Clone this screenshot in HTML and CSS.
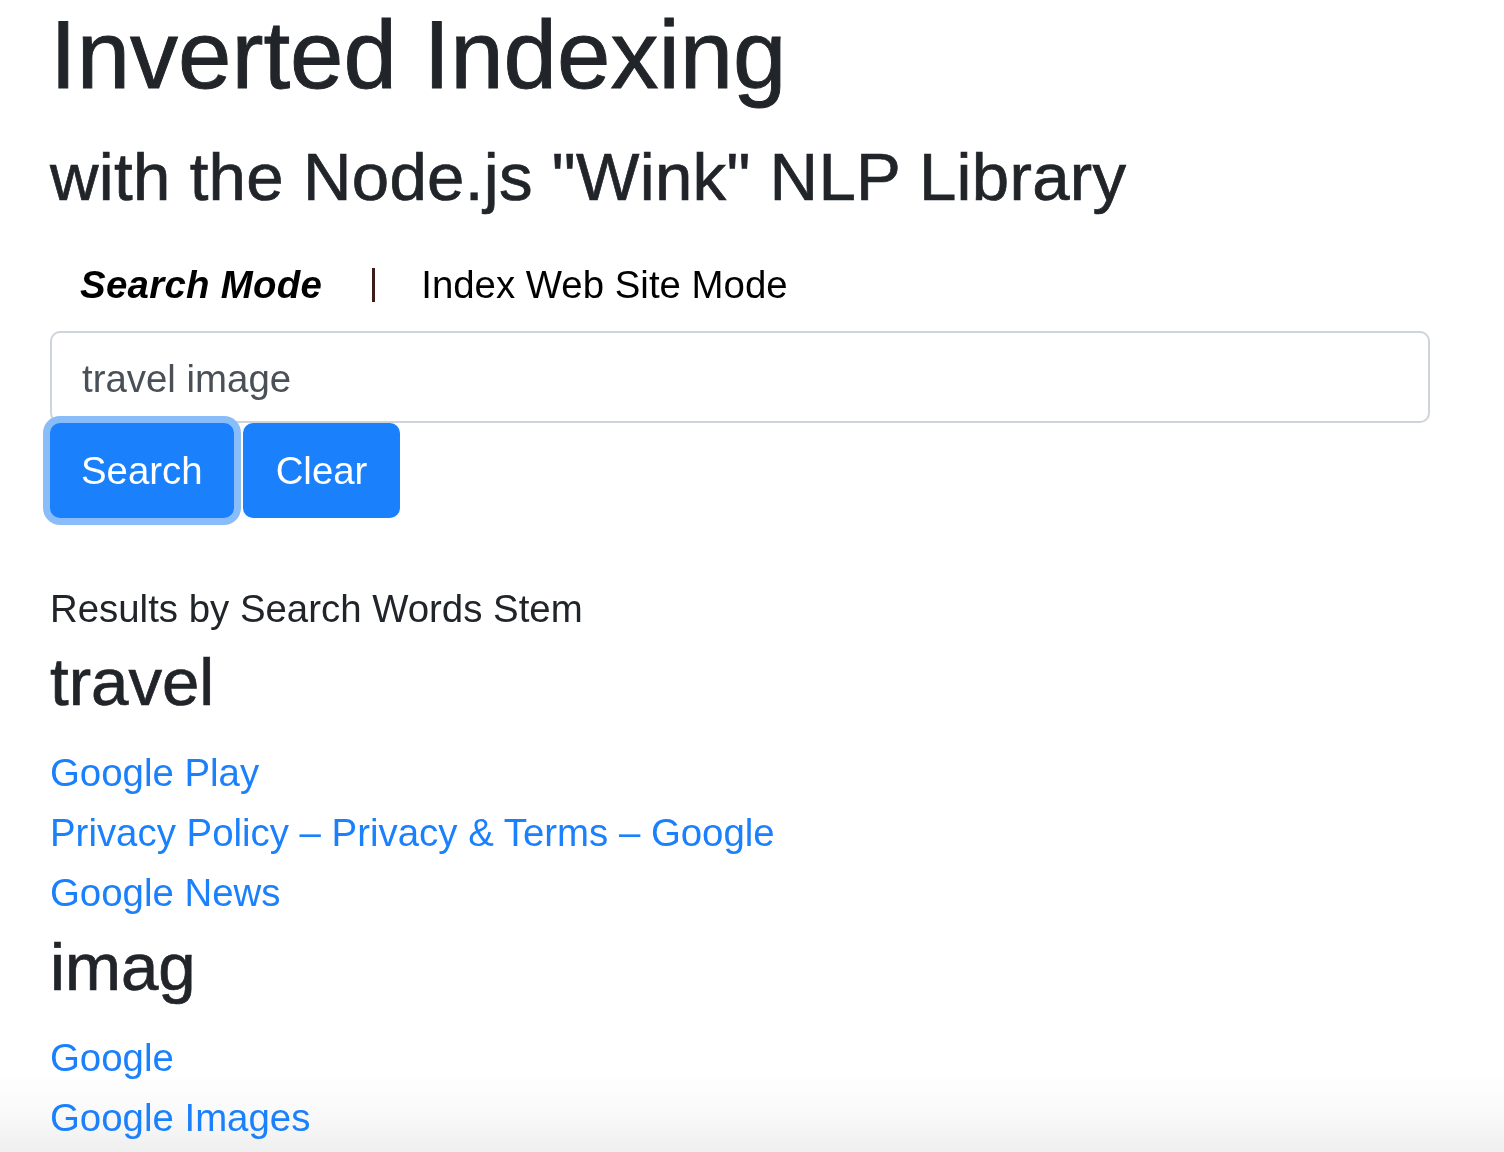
FILE: index.html
```html
<!DOCTYPE html>
<html lang="en">
<head>
<meta charset="utf-8">
<title>Inverted Indexing</title>
<link rel="stylesheet" href="styles.css">
</head>
<body>
<div class="window-fade"></div>
<main class="page">
  <h1 class="title">Inverted Indexing</h1>
  <h3 class="subtitle">with the Node.js "Wink" NLP Library</h3>

  <nav class="modes">
    <span class="mode mode-active">Search Mode</span>
    <span class="mode-sep"></span>
    <span class="mode">Index Web Site Mode</span>
  </nav>

  <form class="search">
    <input class="search-input" type="text" value="travel image">
    <div class="search-actions">
      <button type="button" class="btn btn-focus">Search</button>
      <button type="button" class="btn">Clear</button>
    </div>
  </form>

  <section class="results">
    <div class="results-label">Results by Search Words Stem</div>

    <div class="stem">
      <h3 class="stem-title">travel</h3>
      <ul class="links">
        <li><a href="#">Google Play</a></li>
        <li><a href="#">Privacy Policy – Privacy &amp; Terms – Google</a></li>
        <li><a href="#">Google News</a></li>
      </ul>
    </div>

    <div class="stem">
      <h3 class="stem-title">imag</h3>
      <ul class="links">
        <li><a href="#">Google</a></li>
        <li><a href="#">Google Images</a></li>
      </ul>
    </div>
  </section>
</main>
</body>
</html>
```

FILE: styles.css
```css
html, body {
  margin: 0;
  padding: 0;
  background: #ffffff;
}

body {
  font-family: "Liberation Sans", Arial, Helvetica, sans-serif;
  color: #212529;
  font-size: 38.4px;
}

.page {
  position: relative;
  padding: 0 74px 0 50px;
}

.title {
  margin: 0 0 27px 0;
  font-size: 96px;
  line-height: 110px;
  font-weight: 400;
  color: #212529;
  -webkit-text-stroke: 0.9px #212529;
}

.subtitle {
  margin: 0;
  font-size: 67.2px;
  line-height: 80px;
  font-weight: 400;
  color: #212529;
  letter-spacing: 0.3px;
  -webkit-text-stroke: 0.7px #212529;
}

.modes {
  margin-top: 39px;
  height: 58px;
  display: flex;
  align-items: center;
  padding-left: 30px;
  font-size: 38.4px;
  line-height: 58px;
  color: #000000;
}

.mode-active {
  font-weight: 700;
  font-style: italic;
  margin-right: 50px;
  letter-spacing: 0.3px;
}

.mode-sep {
  width: 3px;
  height: 34px;
  background: #3d1c1c;
}

.mode-sep + .mode {
  margin-left: 46px;
}

.search {
  margin: 17px 0 0 0;
}

.search-input {
  display: block;
  box-sizing: border-box;
  width: 100%;
  height: 92px;
  margin: 0;
  padding: 3px 30px 0 30px;
  border: 2px solid #ced4da;
  border-radius: 10px;
  font-family: "Liberation Sans", Arial, Helvetica, sans-serif;
  font-size: 38.4px;
  color: #495057;
  background: #ffffff;
  outline: none;
}

.search-actions {
  display: flex;
  gap: 9px;
}

.btn {
  box-sizing: border-box;
  height: 95px;
  margin: 0;
  padding: 0 31px;
  border: 0;
  border-radius: 10px;
  background: #1b80fb;
  color: #ffffff;
  font-family: "Liberation Sans", Arial, Helvetica, sans-serif;
  font-size: 38.4px;
  line-height: 95px;
  cursor: pointer;
}

.btn + .btn {
  padding: 0 33px;
}

.btn-focus {
  box-shadow: 0 0 0 7px #89bdfa;
  position: relative;
}

.results {
  margin-top: 62px;
}

.results-label {
  font-size: 38.4px;
  line-height: 58px;
  color: #212529;
}

.stem-title {
  margin: 4px 0 21px 0;
  font-size: 67.2px;
  line-height: 80px;
  font-weight: 400;
  color: #212529;
  -webkit-text-stroke: 0.7px #212529;
}

.links {
  list-style: none;
  margin: 0;
  padding: 0;
}

.links li {
  font-size: 38.4px;
  line-height: 60px;
}

.links a {
  color: #1b80fb;
  text-decoration: none;
}

.window-fade {
  position: fixed;
  left: 0;
  right: 0;
  bottom: 0;
  height: 80px;
  pointer-events: none;
  background: linear-gradient(to bottom,
    rgba(239, 239, 239, 0) 0%,
    rgba(239, 239, 239, 0.35) 50%,
    rgba(239, 239, 239, 1) 100%);
}
```
